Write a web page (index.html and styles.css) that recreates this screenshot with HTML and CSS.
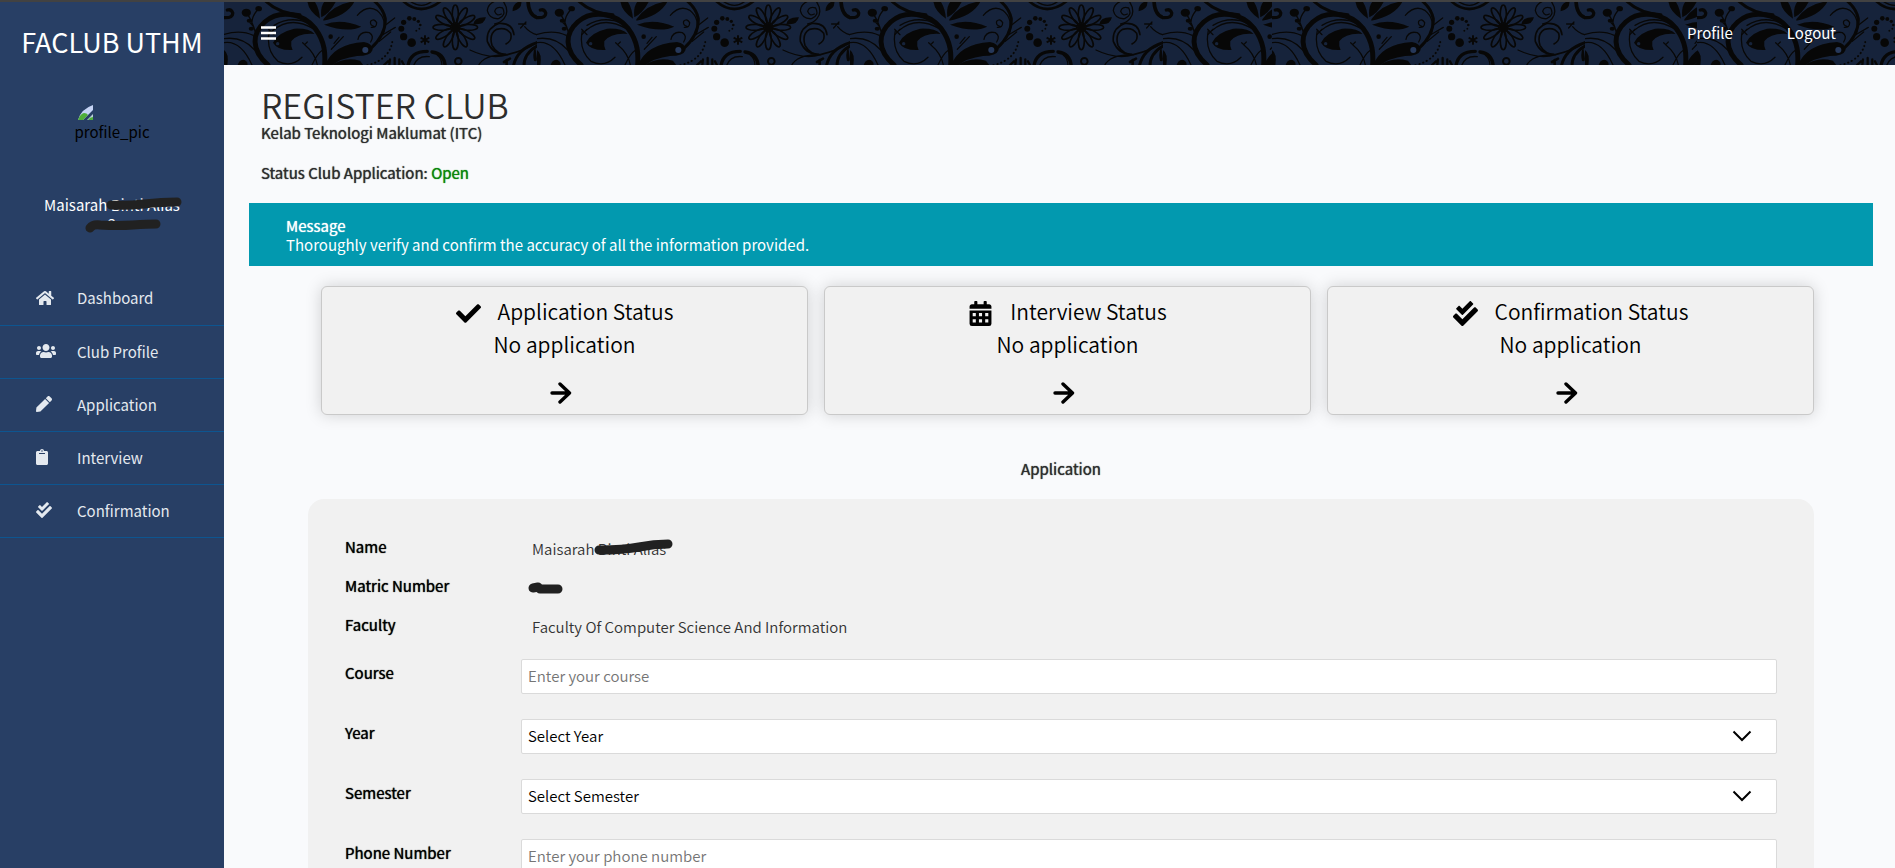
FILE: index.html
```html
<!DOCTYPE html>
<html lang="en">
<head>
<meta charset="utf-8">
<meta name="viewport" content="width=device-width, initial-scale=1">
<title>FACLUB UTHM - Register Club</title>
<link rel="stylesheet" href="styles.css">
</head>
<body>
<svg class="defs" aria-hidden="true">
  <defs>
    <pattern id="floral" width="313" height="66" patternUnits="userSpaceOnUse">
      <g transform="scale(.3333) translate(0 -6)" fill="#070707" stroke="none">
        <g fill="none" stroke="#070707" stroke-linecap="round" stroke-width="4">
          <path d="M2 53Q28 54 26 38Q22 26 10 30" stroke-width="10"/>
          <path d="M70 42Q84 62 94 96M100 30Q84 50 84 66M78 68Q88 76 94 94" />
          <path d="M0 103Q50 88 88 106M0 116Q56 108 92 150M0 128Q50 120 84 195" />
          <path d="M132 195C80 150 84 100 122 66C165 28 236 38 274 86C304 126 304 164 302 195" stroke-width="15"/>
          <path d="M126 4Q164 40 228 44" stroke-width="9"/>
          <path d="M136 92Q124 150 162 184Q202 204 234 172M146 92Q200 46 268 86M150 76Q200 46 256 70"/>
          <path d="M134 88L150 104M134 104L150 88M236 128L242 134L250 126M242 134Q274 160 280 195M264 195Q280 160 296 150"/>
          <path d="M322 148L358 110M345 112L330 130"/>
          <path d="M400 46Q430 12 460 32Q490 56 478 104M452 80Q436 76 440 64Q450 54 458 68Q458 84 442 82M402 118Q408 92 436 98Q452 108 440 126"/>
          <path d="M440 146Q486 104 484 56Q478 26 452 4" stroke-width="9"/>
          <path d="M480 102L514 82M484 76L512 54M466 124L500 96"/>
          <path d="M430 196Q500 178 506 118" stroke-width="6" stroke-dasharray="1 11"/>
          <path d="M480 195L492 184M496 195L498 178M512 195V174M526 195L526 178M540 195L534 184" stroke-width="7"/>
          <path d="M536 2Q590 52 652 2" stroke-width="8"/>
          <path d="M556 2Q594 30 626 2"/>
          <path d="M552 198Q558 154 610 154M664 198Q660 160 624 156" stroke-width="10"/>
          <path d="M568 198Q580 166 616 170M640 166Q654 176 654 198"/>
          <circle cx="703" cy="184" r="10" stroke-width="6"/>
          <path d="M832 42Q818 50 812 34Q816 18 836 24Q848 46 824 56Q796 58 790 32Q792 12 812 4M838 4Q858 34 840 56Q830 68 812 72"/>
          <path d="M846 132Q866 122 860 100Q846 80 818 88Q794 102 804 136Q820 164 850 164Q910 150 940 126M870 104Q866 68 826 70Q786 84 790 124Q806 164 844 162" stroke-width="5"/>
          <path d="M738 150Q800 180 852 164M764 196Q780 166 840 164M902 80Q930 114 976 104M884 72L906 72M890 84L906 66"/>
          <path d="M912 2Q914 50 946 54" stroke-width="11"/>
          <path d="M868 198Q880 146 939 128M900 198Q900 160 939 138" stroke-width="9"/>
          <path d="M848 180V198M858 176L840 186" stroke-width="8"/>
        </g>
        <g fill="none" stroke="#070707" stroke-width="5">
          <g id="petals">
            <ellipse cx="694" cy="42" rx="9" ry="27"/>
            <ellipse cx="694" cy="122" rx="9" ry="27"/>
            <ellipse cx="654" cy="82" rx="27" ry="9"/>
            <ellipse cx="734" cy="82" rx="27" ry="9"/>
          </g>
          <use href="#petals" transform="rotate(30 694 82)"/>
          <use href="#petals" transform="rotate(60 694 82)"/>
        </g>
        <circle cx="694" cy="82" r="13"/>
        <ellipse cx="67" cy="38" rx="14" ry="12"/>
        <ellipse cx="104" cy="26" rx="10" ry="8"/>
        <ellipse cx="76" cy="62" rx="8" ry="6"/>
        <ellipse cx="82" cy="86" rx="8" ry="6"/>
        <path d="M147 128Q160 98 210 86Q256 84 272 102Q222 98 202 124Q200 138 206 150Q160 152 147 128Z"/>
        <path d="M288 56Q254 34 250 4L272 4Q286 26 288 56ZM292 52Q288 20 302 4L336 4Q318 40 292 52ZM298 58Q330 10 392 4Q370 48 298 62ZM300 74Q350 54 412 80Q370 100 300 74Z"/>
        <circle cx="320" cy="110" r="7"/>
        <path d="M302 198Q326 132 420 126Q446 130 446 150Q440 168 400 168Q350 174 322 198Z"/>
        <path d="M0 150Q16 160 10 198L0 198ZM40 198Q46 176 62 180Q74 186 70 198ZM320 198Q360 168 408 182L420 198Z"/>
        <circle cx="161" cy="131" r="5" fill="#16233b"/>
        <circle cx="424" cy="150" r="9" fill="#26385a"/>
        <circle cx="563" cy="128" r="13"/><circle cx="539" cy="110" r="11"/>
        <circle cx="532" cy="86" r="9"/><circle cx="539" cy="67" r="8"/>
        <circle cx="556" cy="55" r="7"/><circle cx="571" cy="57" r="6"/>
        <circle cx="583" cy="64" r="5"/><circle cx="589" cy="75" r="4"/>
        <circle cx="586" cy="86" r="3"/><circle cx="577" cy="92" r="3"/>
        <path d="M603 106V134M590 113L616 127M590 127L616 113" stroke="#070707" stroke-width="6"/>
        <path d="M748 72Q752 50 786 52Q780 78 748 72ZM866 34Q864 10 892 2Q896 28 866 34ZM934 140Q924 160 930 182Q939 188 939 176Z"/>
      </g>
    </pattern>
    <symbol id="check-double" viewBox="0 0 512 512"><path d="M505 174.8l-39.6-39.6c-9.4-9.4-24.6-9.4-33.9 0L192 374.7 80.6 263.2c-9.4-9.4-24.6-9.4-33.9 0L7 302.9c-9.4 9.4-9.4 24.6 0 34L175 505c9.4 9.4 24.6 9.4 33.9 0l296-296.2c9.4-9.5 9.4-24.7.1-34zm-324.3 106c6.2 6.3 16.4 6.3 22.6 0l208-208.2c6.2-6.3 6.2-16.4 0-22.6L366.1 4.7c-6.2-6.3-16.4-6.3-22.6 0L192 156.2l-55.4-55.5c-6.2-6.3-16.4-6.3-22.6 0L68.7 146c-6.2 6.3-6.2 16.4 0 22.6l112 112.2z"/></symbol>
    <symbol id="arrow" viewBox="0 0 22 22"><path d="M2 11H19M10 2L19.500 11L10 20" fill="none" stroke="currentColor" stroke-width="3.400" stroke-linecap="round" stroke-linejoin="round"/></symbol>
    <symbol id="chevron" viewBox="0 0 20 12"><path d="M1.500 1.500L10 10L18.500 1.500" fill="none" stroke="currentColor" stroke-width="2"/></symbol>
  </defs>
</svg>

<div class="app">
  <aside class="sidebar">
    <h2 class="brand">FACLUB UTHM</h2>
    <div class="avatar">
      <svg class="broken" viewBox="0 0 16 16" aria-hidden="true">
        <path d="M0 15Q3 4 15 0V5L5 15Z" fill="#c6d4f5"/>
        <path d="M0 15Q2 9 6 8Q9 8 10 10L5 15Z" fill="#4fae3a"/>
        <path d="M9 15L15 9V15Z" fill="#b9d0d8"/><path d="M10 15Q12 12 15 12V15Z" fill="#4fae3a"/>
      </svg>
      <span>profile_pic</span>
    </div>
    <div class="user">
      <span>Maisarah Binti Alias</span>
      <span>2</span>
      <svg class="scribble" viewBox="0 0 148 40" aria-hidden="true">
        <path d="M75 11Q90 12 108 10T141 8M54 34Q57 30 64 31Q82 32 97 31T120 30"/>
      </svg>
    </div>
    <nav class="menu">
      <a href="#"><svg class="w18" viewBox="0 0 576 512"><path d="M280.370 148.260L96 300.110V464a16 16 0 0 0 16 16l112.060-.29a16 16 0 0 0 15.920-16V368a16 16 0 0 1 16-16h64a16 16 0 0 1 16 16v95.640a16 16 0 0 0 16 16.050L464 480a16 16 0 0 0 16-16V300L295.670 148.260a12.190 12.190 0 0 0-15.300 0zM571.600 251.470L488 182.560V44.050a12 12 0 0 0-12-12h-56a12 12 0 0 0-12 12v72.610L318.470 43a48 48 0 0 0-61 0L4.340 251.470a12 12 0 0 0-1.600 16.900l25.500 31A12 12 0 0 0 45.150 301l235.220-193.740a12.190 12.190 0 0 1 15.300 0L530.900 301a12 12 0 0 0 16.900-1.600l25.500-31a12 12 0 0 0-1.700-16.930z"/></svg><span>Dashboard</span></a>
      <a href="#"><svg class="w20" viewBox="0 0 640 512"><path d="M96 224c35.300 0 64-28.700 64-64s-28.700-64-64-64-64 28.700-64 64 28.700 64 64 64zm448 0c35.300 0 64-28.700 64-64s-28.700-64-64-64-64 28.700-64 64 28.700 64 64 64zm32 32h-64c-17.600 0-33.500 7.100-45.100 18.600 40.300 22.100 68.900 62 75.100 109.400h66c17.700 0 32-14.300 32-32v-32c0-35.300-28.700-64-64-64zm-256 0c61.900 0 112-50.100 112-112S381.900 32 320 32 208 82.100 208 144s50.100 112 112 112zm76.800 32h-8.300c-20.800 10-43.900 16-68.500 16s-47.600-6-68.500-16h-8.300C179.600 288 128 339.600 128 403.200V432c0 26.500 21.500 48 48 48h288c26.500 0 48-21.500 48-48v-28.800c0-63.600-51.600-115.200-115.200-115.200zm-223.700-13.400C161.500 263.100 145.600 256 128 256H64c-35.300 0-64 28.700-64 64v32c0 17.700 14.300 32 32 32h65.900c6.300-47.400 34.900-87.300 75.200-109.400z"/></svg><span>Club Profile</span></a>
      <a href="#"><svg class="w16" viewBox="0 0 512 512"><path d="M290.740 93.240l128.020 128.020-277.990 277.990-114.140 12.600C11.350 513.540-1.560 500.620.140 485.340l12.700-114.220 277.900-277.880zm207.200-19.060l-60.110-60.110c-18.750-18.750-49.160-18.750-67.910 0l-56.550 56.550 128.020 128.020 56.550-56.550c18.750-18.760 18.750-49.160 0-67.910z"/></svg><span>Application</span></a>
      <a href="#"><svg class="w12" viewBox="0 0 384 512"><path d="M384 112v352c0 26.510-21.490 48-48 48H48c-26.510 0-48-21.490-48-48V112c0-26.510 21.490-48 48-48h80c0-35.290 28.710-64 64-64s64 28.710 64 64h80c26.510 0 48 21.490 48 48zM192 40c-13.255 0-24 10.745-24 24s10.745 24 24 24 24-10.745 24-24-10.745-24-24-24m96 114v-20a6 6 0 0 0-6-6H102a6 6 0 0 0-6 6v20a6 6 0 0 0 6 6h180a6 6 0 0 0 6-6z"/></svg><span>Interview</span></a>
      <a href="#"><svg class="w16"><use href="#check-double"/></svg><span>Confirmation</span></a>
    </nav>
  </aside>

  <div class="page">
    <header class="topbar">
      <div class="motif" aria-hidden="true">
        <svg class="motif-main"><rect width="100%" height="100%" fill="url(#floral)"/></svg>
        <svg class="motif-list"><rect width="100%" height="100%" fill="url(#floral)"/></svg>
        <svg class="motif-end"><rect width="100%" height="100%" fill="url(#floral)"/></svg>
      </div>
      <button class="toggle" type="button" aria-label="Toggle menu"><svg viewBox="0 0 15 14"><path d="M0 1.500H15M0 7H15M0 12.500H15" stroke="currentColor" stroke-width="2.600"/></svg></button>
      <nav class="links"><a href="#">Profile</a><a href="#">Logout</a></nav>
    </header>

    <main class="content">
      <div class="intro">
        <h1>REGISTER CLUB</h1>
        <p>Kelab Teknologi Maklumat (ITC)</p>
        <p class="state">Status Club Application: <span class="open">Open</span></p>
      </div>
      <div class="message">
        <strong>Message</strong>
        <p>Thoroughly verify and confirm the accuracy of all the information provided.</p>
      </div>

      <div class="cards">
        <section class="card">
          <h3><svg viewBox="0 0 512 512"><path d="M173.898 439.404l-166.400-166.400c-9.997-9.997-9.997-26.206 0-36.204l36.203-36.204c9.997-9.998 26.207-9.998 36.204 0L192 312.690 432.095 72.596c9.997-9.997 26.207-9.997 36.204 0l36.203 36.204c9.997 9.997 9.997 26.206 0 36.204l-294.400 294.401c-9.998 9.997-26.207 9.997-36.204-.001z"/></svg>Application Status</h3>
          <p>No application</p>
          <a href="#" aria-label="Application status details"><svg><use href="#arrow"/></svg></a>
        </section>
        <section class="card">
          <h3><svg viewBox="0 0 448 512"><path fill-rule="evenodd" d="M0 192H448V464Q448 512 400 512H48Q0 512 0 464ZM64 248V312H128V248ZM192 248V312H256V248ZM320 248V312H384V248ZM64 376V440H128V376ZM192 376V440H256V376ZM320 376V440H384V376Z"/><path d="M400 64h-48V16c0-8.800-7.200-16-16-16h-32c-8.800 0-16 7.200-16 16v48H160V16c0-8.800-7.200-16-16-16h-32c-8.800 0-16 7.200-16 16v48H48C21.500 64 0 85.500 0 112v48h448v-48c0-26.500-21.500-48-48-48z"/></svg>Interview Status</h3>
          <p>No application</p>
          <a href="#" aria-label="Interview status details"><svg><use href="#arrow"/></svg></a>
        </section>
        <section class="card">
          <h3><svg><use href="#check-double"/></svg>Confirmation Status</h3>
          <p>No application</p>
          <a href="#" aria-label="Confirmation status details"><svg><use href="#arrow"/></svg></a>
        </section>
      </div>

      <h4 class="form-title">Application</h4>
      <form class="panel">
        <div class="row fact">
          <span class="label">Name</span>
          <span class="value">Maisarah Binti Alias
            <svg class="strike strike-name" viewBox="0 0 90 28" aria-hidden="true"><path d="M10 18Q35 18 50 15T79 12"/></svg>
          </span>
        </div>
        <div class="row fact">
          <span class="label">Matric Number</span>
          <span class="value">
            <svg class="strike strike-matric" viewBox="0 0 40 16" aria-hidden="true"><path d="M7 8L12 7L14 9H32"/></svg>
          </span>
        </div>
        <div class="row fact">
          <span class="label">Faculty</span>
          <span class="value">Faculty Of Computer Science And Information</span>
        </div>
        <div class="row field">
          <label class="label" for="course">Course</label>
          <input id="course" type="text" placeholder="Enter your course">
        </div>
        <div class="row field">
          <label class="label" for="year">Year</label>
          <div class="select"><select id="year"><option>Select Year</option></select><svg aria-hidden="true"><use href="#chevron"/></svg></div>
        </div>
        <div class="row field">
          <label class="label" for="semester">Semester</label>
          <div class="select"><select id="semester"><option>Select Semester</option></select><svg aria-hidden="true"><use href="#chevron"/></svg></div>
        </div>
        <div class="row field">
          <label class="label" for="phone">Phone Number</label>
          <input id="phone" type="text" placeholder="Enter your phone number">
        </div>
      </form>
    </main>
  </div>
</div>
</body>
</html>
```

FILE: styles.css
```css
* { box-sizing: border-box; }
html { scrollbar-width: none; }
body {
  margin: 0;
  background: #f9fafc;
  border-top: 2px solid #424242;
  font-family: "Noto Sans CJK SC", "Noto Sans", sans-serif;
  font-size: 15px;
  line-height: 19px;
  color: #000;
}
h1, h2, h3, h4, p { margin: 0; font-weight: 400; }
a { color: inherit; text-decoration: none; }
svg { fill: currentColor; display: block; }
.defs { position: absolute; width: 0; height: 0; }

.app { display: flex; align-items: stretch; min-height: calc(100vh - 2px); }

.sidebar { width: 224px; flex: none; background: #283f65; color: #fff; text-align: center; }
.brand { font-size: 27px; line-height: 40px; padding-top: 20px; }
.avatar { height: 112px; padding-top: 43px; color: #000; display: flex; flex-direction: column; align-items: center; }
.broken { width: 16px; height: 16px; align-self: flex-start; margin-left: 78px; }
.avatar span { line-height: 22px; }
.user { position: relative; display: flex; flex-direction: column; margin-top: 21px; height: 77px; }
.scribble { position: absolute; left: 36px; top: -1px; width: 148px; height: 40px; fill: none; stroke: #212121; stroke-width: 9; stroke-linecap: round; }
.menu a { display: flex; align-items: center; height: 54px; padding: 0 0 2px 36px; border-bottom: 1px solid #0d5590; color: #e4e9ef; }
.menu a + a { height: 53px; }
.menu svg { height: 16px; }
.menu span { margin-left: auto; width: 147px; text-align: left; }
.w12 { width: 12px; }
.w16 { width: 16px; }
.w18 { width: 18px; }
.w20 { width: 20px; }

.page { flex: 1; min-width: 0; }
.topbar { position: relative; height: 63px; background: #16233b; color: #fff; display: flex; align-items: center; justify-content: space-between; padding: 0 59px 2px 37px; }
.motif { position: absolute; inset: 0; display: flex; }
.motif svg { height: 100%; }
.motif-main { flex: 1; min-width: 0; }
.motif-list { width: 425px; }
.motif-end { width: 198px; }
.toggle { position: relative; border: 0; padding: 0; background: none; color: #fff; }
.toggle svg { width: 15px; height: 14px; }
.links { position: relative; display: flex; gap: 54px; }

.content { padding: 22px 22px 60px 25px; }
.intro { padding-left: 12px; color: #2d2d2d; }
.intro p, .form-title, .label, .message strong { font-weight: 400; text-shadow: 0 0 1px currentColor; }
.intro h1 { font-size: 34px; line-height: 36px; font-weight: 350; }
.intro .state { margin-top: 21px; }
.open { color: #0a860a; }
.message { margin-top: 21px; padding: 13px 37px 12px; background: #0299af; color: #fff; }

.cards { display: grid; grid-template-columns: repeat(3, 1fr); gap: 16px; padding: 20px 59px 0 72px; }
.card { height: 129px; padding-top: 8px; background: #f1f1f1; border: 1px solid #c9c9c9; border-radius: 6px; box-shadow: 0 0 16px rgba(0, 0, 0, .17); display: flex; flex-direction: column; align-items: center; font-size: 21px; line-height: 33px; }
.card h3 { display: flex; align-items: center; gap: 17px; font-size: inherit; font-weight: 350; }
.card p { font-weight: 350; }
.card h3 svg { width: 25px; height: 25px; margin-top: 4px; }
.card a { margin-top: 21px; padding-right: 8px; }
.card a svg { width: 22px; height: 22px; }

.form-title { margin-top: 44px; text-align: center; font-size: 15px; color: #2d2d2d; }
.panel { margin: 21px 59px 0 59px; padding: 36px 37px 40px; background: #f1f1f1; border-radius: 16px; }
.row { display: grid; grid-template-columns: 176px 1fr; }
.label { padding-top: 2px; }
.fact { height: 39px; }
.value { position: relative; padding: 4px 0 0 11px; font-weight: 350; color: #333; }
.strike { position: absolute; fill: none; stroke: #212121; stroke-width: 9; stroke-linecap: round; stroke-linejoin: round; }
.strike-name { left: 68px; top: -3px; width: 90px; height: 28px; }
.strike-matric { left: 5px; top: 6px; width: 40px; height: 16px; }
.field { height: 60px; }
.fact + .field { margin-top: 7px; }
.field .label { padding-top: 4px; }
.field input, .field select { width: 100%; height: 35px; padding: 0 6px 2px; border: 1px solid #dadada; border-radius: 2px; background: #fff; color: #000; font: inherit; font-weight: 350; appearance: none; }
.field input::placeholder { color: #757575; opacity: 1; }
.select { position: relative; height: 35px; }
.select svg { position: absolute; right: 25px; top: 11px; width: 20px; height: 12px; pointer-events: none; }
```
